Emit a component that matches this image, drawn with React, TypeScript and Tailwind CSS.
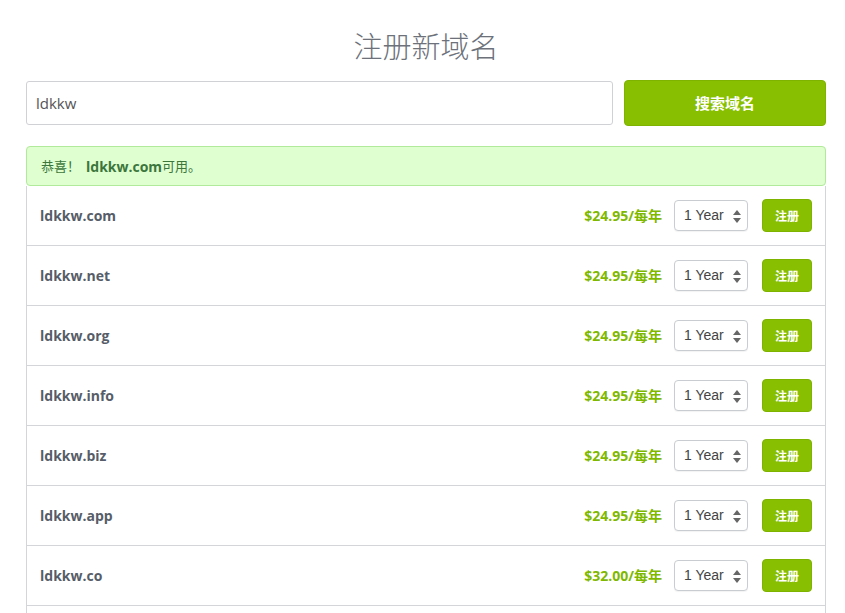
import React from "react";

const domains = [
  { name: "ldkkw.com", price: "$24.95" },
  { name: "ldkkw.net", price: "$24.95" },
  { name: "ldkkw.org", price: "$24.95" },
  { name: "ldkkw.info", price: "$24.95" },
  { name: "ldkkw.biz", price: "$24.95" },
  { name: "ldkkw.app", price: "$24.95" },
  { name: "ldkkw.co", price: "$32.00" },
];

const sans = "font-['Open_Sans','Noto_Sans_CJK_SC',sans-serif]";

function YearSelect() {
  return (
    <div className="relative flex items-center w-[74px] h-[31px] border border-[#c9ccd1] rounded-[4px] bg-white shadow-[0_1px_1px_rgba(0,0,0,0.05)] pl-[9px] font-['Liberation_Sans',sans-serif] text-[14px] text-[#444]">
      1 Year
      <svg className="absolute right-[6px] top-[9px]" width="8" height="13" viewBox="0 0 8 13">
        <path d="M4 0 L8 5 L0 5 Z" fill="#666" />
        <path d="M4 13 L8 8 L0 8 Z" fill="#666" />
      </svg>
    </div>
  );
}

export default function App() {
  return (
    <div className={`w-[845px] h-[613px] overflow-hidden bg-white ${sans}`}>
      <div className="w-[800px] ml-[26px]">
        <h1 className="text-center text-[29px] font-light text-[#6c717a] pt-[25px] leading-[40px] font-['Noto_Sans_CJK_SC',sans-serif]">
          注册新域名
        </h1>

        <div className="flex items-center gap-[11px] mt-[15px]">
          <div className="flex-1 h-[44px] border border-[#cfd1d5] rounded-[3px] flex items-center px-[9px] text-[15px] text-[#555]">
            ldkkw
          </div>
          <button className="w-[202px] h-[46px] rounded-[4px] bg-[#88bf00] border border-[#7eb300] text-white text-[15px] font-bold font-['Noto_Sans_CJK_SC',sans-serif]">
            搜索域名
          </button>
        </div>

        <div className="mt-[20px] h-[40px] bg-[#dfffd0] border border-[#b0ea9a] rounded-[4px] flex items-center px-[14px] text-[13px] text-[#3c763d]">
          <span className="font-['Noto_Sans_CJK_SC',sans-serif]">恭喜！</span>
          <span className="ml-[6px] font-bold text-[14px]">ldkkw.com</span>
          <span className="font-['Noto_Sans_CJK_SC',sans-serif]">可用。</span>
        </div>

        <div className="border-x border-[#d3d5d9]">
          {domains.map((d) => (
            <div
              key={d.name}
              className="h-[60px] border-b border-[#d3d5d9] flex items-center pl-[13px] pr-[13px]"
            >
              <span className="flex-1 text-[14px] font-bold text-[#565d68]">{d.name}</span>
              <span className="text-[14px] font-bold text-[#7fb800] mr-[12px]">
                {d.price}/<span className="font-['Noto_Sans_CJK_SC',sans-serif]">每年</span>
              </span>
              <YearSelect />
              <button className="ml-[14px] w-[50px] h-[33px] rounded-[4px] bg-[#88bf00] border border-[#7eb300] text-white text-[12px] font-bold font-['Noto_Sans_CJK_SC',sans-serif]">
                注册
              </button>
            </div>
          ))}
          <div className="h-[60px]" />
        </div>
      </div>
    </div>
  );
}
